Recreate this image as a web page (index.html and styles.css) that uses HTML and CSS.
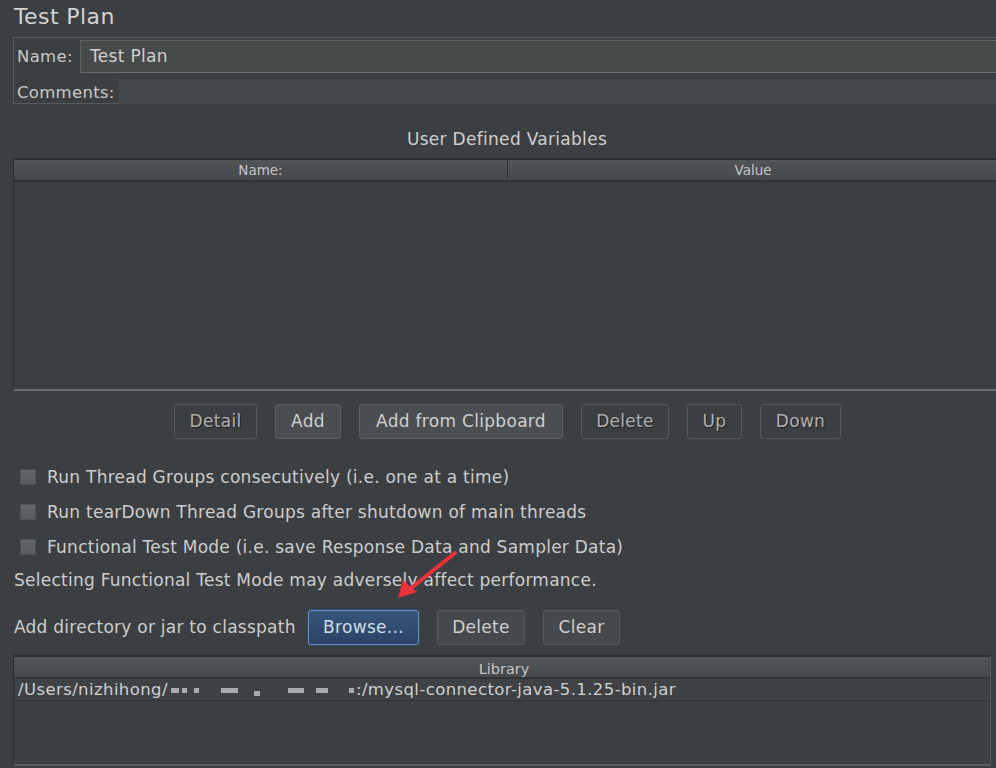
FILE: index.html
```html
<!DOCTYPE html>
<html>
<head>
<meta charset="utf-8">
<link rel="stylesheet" href="styles.css">
</head>
<body>
<div class="page">
  <div class="title">Test Plan</div>
  <div class="panel">
    <div class="row name-row">
      <span class="label">Name:</span>
      <div class="field name-field">Test Plan</div>
    </div>
    <div class="row comments-row">
      <span class="label">Comments:</span>
      <div class="field comments-field"></div>
    </div>
  </div>

  <div class="section-title">User Defined Variables</div>
  <div class="table vars">
    <div class="thead">
      <div class="th th-name">Name:</div>
      <div class="th th-value">Value</div>
    </div>
    <div class="tbody"></div>
  </div>

  <div class="button-row">
    <div class="btn disabled w-detail">Detail</div>
    <div class="btn w-add">Add</div>
    <div class="btn w-clip">Add from Clipboard</div>
    <div class="btn disabled w-delete">Delete</div>
    <div class="btn disabled w-up">Up</div>
    <div class="btn disabled w-down">Down</div>
  </div>

  <div class="checks">
    <div class="check"><span class="box"></span>Run Thread Groups consecutively (i.e. one at a time)</div>
    <div class="check"><span class="box"></span>Run tearDown Thread Groups after shutdown of main threads</div>
    <div class="check"><span class="box"></span>Functional Test Mode (i.e. save Response Data and Sampler Data)</div>
  </div>
  <div class="note">Selecting Functional Test Mode may adversely affect performance.</div>

  <div class="classpath">
    <span class="cp-label">Add directory or jar to classpath</span>
    <div class="btn browse">Browse...</div>
    <div class="btn w-del2">Delete</div>
    <div class="btn w-clear">Clear</div>
  </div>

  <div class="table lib">
    <div class="thead"><div class="th th-lib">Library</div></div>
    <div class="lib-row">/Users/nizhihong/<span class="px p1"></span><span class="px p2"></span><span class="px p3"></span><span class="px p4"></span><span class="px p5"></span><span class="px p6"></span><span class="px p7"></span><span class="px p8"></span>:/mysql-connector-java-5.1.25-bin.jar</div>
  </div>

  <svg class="arrow" width="80" height="70" viewBox="0 0 80 70">
    <line x1="67" y1="8" x2="22" y2="44" stroke="#e8323c" stroke-width="4" stroke-linecap="round"/>
    <polygon points="10,53 15,35 29,47" fill="#e8323c"/>
  </svg>
</div>
</body>
</html>
```

FILE: styles.css
```css
html, body {
  margin: 0;
  padding: 0;
  background: #3c3f41;
  overflow: hidden;
}
.page {
  position: relative;
  width: 996px;
  height: 768px;
  overflow: hidden;
  font-family: "DejaVu Sans", "Liberation Sans", sans-serif;
  color: #c9c9c9;
  font-size: 16px;
}
.title {
  height: 37px;
  padding-left: 14px;
  font-size: 22px;
  letter-spacing: 0.4px;
  line-height: 33px;
  color: #d3d3d3;
}
.panel {
  margin-left: 13px;
  width: 1000px;
  height: 67px;
  border: 1px solid #585b5e;
  border-right: none;
  box-sizing: border-box;
  padding-top: 2px;
}
.row {
  display: flex;
  align-items: center;
}
.label {
  padding-left: 3px;
  color: #c9c9c9;
  font-size: 16.5px;
  letter-spacing: 0.3px;
}
.name-row { height: 33px; }
.name-row .label { width: 63px; }
.name-field {
  flex: 1;
  height: 33px;
  box-sizing: border-box;
  border: 1px solid #5f6265;
  border-bottom-color: #6a6d70;
  background: #474a4b;
  padding-left: 9px;
  line-height: 31px;
  font-size: 17px;
  letter-spacing: 0.3px;
  color: #d0d0d0;
}
.comments-row { height: 25px; margin-top: 6px; }
.comments-row .label { width: 102px; padding-top: 2px; }
.comments-field {
  flex: 1;
  height: 25px;
  background: #45484b;
}
.section-title {
  margin-top: 24px;
  height: 30px;
  text-align: center;
  font-size: 17px;
  letter-spacing: 0.3px;
  line-height: 22px;
  padding-left: 18px;
  color: #cfcfcf;
}
.table {
  margin-left: 13px;
  border-left: 1px solid #2a2c2e;
  border-top: 2px solid #2c2e30;
}
.vars {
  width: 1000px;
  height: 229px;
  border-bottom: 2px solid #6b6e71;
}
.thead {
  display: flex;
  height: 20px;
  background: linear-gradient(#525558, #46494c);
  border-bottom: 2px solid #303234;
  font-size: 13.5px;
  line-height: 20px;
  color: #c4c4c4;
}
.th { text-align: center; }
.th-name { width: 493px; border-right: 1px solid #2e3032; }
.th-value { width: 490px; }
.tbody { height: 205px; }

.button-row {
  display: flex;
  margin-top: 13px;
  padding-left: 174px;
  gap: 18px;
  height: 35px;
}
.btn {
  box-sizing: border-box;
  height: 35px;
  line-height: 33px;
  text-align: center;
  border-radius: 3px;
  font-size: 17px;
  letter-spacing: 0.3px;
  border: 1px solid #5c6063;
  background: #4a4e51;
  color: #d0d0d0;
}
.btn.disabled {
  background: #3c3f41;
  border-color: #55595c;
  color: #b0b0b0;
  text-shadow: 1px 1px 0 #1e1f20;
}
.w-detail { width: 83px; }
.w-add { width: 66px; }
.w-clip { width: 204px; }
.w-delete { width: 88px; }
.w-up { width: 55px; }
.w-down { width: 81px; }

.checks {
  margin-top: 20px;
}
.check {
  display: flex;
  align-items: center;
  height: 35px;
  font-size: 17px;
  letter-spacing: 0.25px;
  color: #cdcdcd;
}
.box {
  width: 16px;
  height: 16px;
  margin-left: 20px;
  margin-right: 11px;
  border-radius: 2px;
  background: linear-gradient(#65686b, #575a5d);
  box-shadow: inset 0 0 0 1px #4e5154;
}
.note {
  height: 33px;
  line-height: 33px;
  padding-left: 14px;
  font-size: 17px;
  letter-spacing: 0.25px;
  color: #cdcdcd;
}
.classpath {
  display: flex;
  align-items: center;
  margin-top: 12px;
  height: 36px;
  padding-left: 14px;
  font-size: 17px;
  letter-spacing: 0.25px;
}
.cp-label { width: 294px; color: #cdcdcd; }
.browse {
  width: 111px;
  background: linear-gradient(#37557b, #2b4467);
  border: 1px solid #6a8fbb;
  box-shadow: 0 0 0 1px #2f4a6b;
  color: #d5dde6;
  margin-right: 18px;
}
.w-del2 { width: 88px; margin-right: 18px; background: #45494b; border-color: #55595c; }
.w-clear { width: 77px; background: #45494b; border-color: #55595c; }

.lib {
  margin-top: 10px;
  width: 978px;
  height: 111px;
  border-right: 1px solid #56595c;
  border-bottom: 2px solid #5b5e61;
  box-sizing: border-box;
}
.th-lib { width: 100%; padding-left: 4px; padding-top: 2px; line-height: 20px; font-size: 14.5px; }
.lib-row {
  height: 21px;
  line-height: 21px;
  padding-left: 4px;
  background: #3f4244;
  border-bottom: 1px solid #303234;
  font-size: 16.5px;
  letter-spacing: 0.4px;
  color: #d0d0d0;
  white-space: nowrap;
}
.px {
  display: inline-block;
  height: 5px;
  background: #a9abad;
  vertical-align: middle;
}
.p1 { width: 8px; margin-left: 3px; }
.p2 { width: 5px; margin-left: 3px; }
.p3 { width: 5px; margin-left: 7px; }
.p4 { width: 17px; margin-left: 22px; }
.p5 { width: 6px; margin-left: 16px; position: relative; top: 3px; }
.p6 { width: 16px; margin-left: 28px; }
.p7 { width: 12px; margin-left: 12px; }
.p8 { width: 5px; margin-left: 21px; margin-right: 2px; }

.arrow {
  position: absolute;
  left: 388px;
  top: 545px;
}
```
